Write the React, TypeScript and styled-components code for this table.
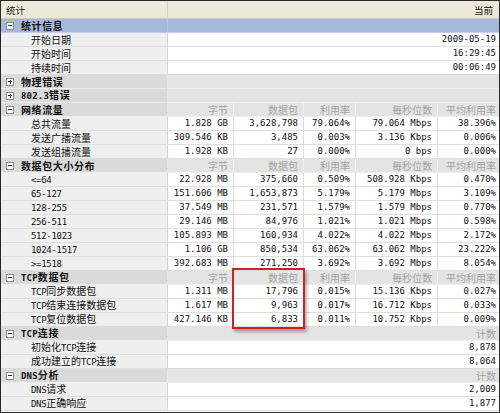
import React from "react";
import styled, { createGlobalStyle, css } from "styled-components";

const GlobalStyle = createGlobalStyle`
  html, body { margin: 0; padding: 0; background: #ffffff; }
  * { box-sizing: border-box; }
`;

const CJK = `"Noto Sans CJK SC", "Noto Sans", sans-serif`;
const MONO = `"DejaVu Sans Mono", "Liberation Mono", monospace`;
const COLS = "167px 66px 70px 52px 82px 1fr";

const Frame = styled.div`
  position: relative;
  width: 500px;
  height: 413px;
  border: 1px solid #2a2a2a;
  overflow: hidden;
  font-family: ${CJK};
  font-size: 10px;
  color: #1a1a1a;
  background: #ffffff;
`;

const Header = styled.div`
  display: grid;
  grid-template-columns: 167px 1fr;
  height: 18px;
  background: #ece9d8;
  border-bottom: 1px solid #d2cebd;
`;

const HeaderCell = styled.div<{ $right?: boolean }>`
  display: flex;
  align-items: center;
  justify-content: ${(p) => (p.$right ? "flex-end" : "flex-start")};
  padding: 0 ${(p) => (p.$right ? "6px" : "0")} 0 ${(p) => (p.$right ? "0" : "5px")};
  font-size: 9.5px;
  color: #111;
  border-right: ${(p) => (p.$right ? "none" : "1px solid #d6d2c2")};
`;

const Row = styled.div<{ $kind: "group" | "item"; $selected?: boolean }>`
  display: grid;
  grid-template-columns: ${COLS};
  height: 14px;
  ${(p) =>
    p.$selected
      ? css`
          background: #a6b8dc;
          border-bottom: 1px solid #c3cfe8;
        `
      : p.$kind === "group"
      ? css`
          background: #dcdcdc;
          border-bottom: 1px solid #eeeeee;
        `
      : css`
          background: #ffffff;
          border-bottom: 1px solid #dddddd;
        `}
`;

const LabelCell = styled.div<{ $kind: "group" | "item"; $selected?: boolean }>`
  display: flex;
  align-items: center;
  height: 13px;
  white-space: nowrap;
  padding-left: ${(p) => (p.$kind === "group" ? "5px" : "30px")};
  background: ${(p) =>
    p.$selected ? "transparent" : p.$kind === "group" ? "#dadada" : "#efefef"};
  border-right: 1px solid
    ${(p) => (p.$selected ? "#b7c6e4" : p.$kind === "group" ? "#e8e8e8" : "#d4d4d4")};
  font-weight: ${(p) => (p.$kind === "group" ? 700 : 400)};
  letter-spacing: ${(p) => (p.$kind === "group" ? "0.6px" : "0")};
  color: #111;
`;

const LabelLine = styled.span`
  display: block;
  line-height: 13px;
`;

const ValueCell = styled.div<{ $span?: boolean; $head?: boolean; $selected?: boolean }>`
  display: flex;
  align-items: center;
  justify-content: flex-end;
  height: 13px;
  line-height: 13px;
  white-space: nowrap;
  overflow: hidden;
  padding-right: 5px;
  grid-column: ${(p) => (p.$span ? "2 / -1" : "auto")};
  font-family: ${(p) => (p.$head ? CJK : MONO)};
  font-size: ${(p) => (p.$head ? "10px" : "9px")};
  color: ${(p) => (p.$head ? "#a3a3a3" : "#111111")};
  background: ${(p) => (p.$selected ? "transparent" : p.$head ? "#e4e4e4" : "#ffffff")};
  border-right: 1px solid ${(p) => (p.$head ? "#f2f2f2" : "#dcdcdc")};
  &:last-child {
    border-right: none;
    padding-right: 3px;
  }
`;

const Expander = styled.span<{ $open: boolean }>`
  position: relative;
  display: inline-block;
  flex: none;
  width: 8px;
  height: 8px;
  margin-right: 7px;
  border: 1px solid #8e8e8e;
  background: #fbfbfb;
  &::before {
    content: "";
    position: absolute;
    left: 1px;
    top: 2.5px;
    width: 4px;
    height: 1px;
    background: #333;
  }
  ${(p) =>
    !p.$open &&
    css`
      &::after {
        content: "";
        position: absolute;
        left: 2.5px;
        top: 1px;
        width: 1px;
        height: 4px;
        background: #333;
      }
    `}
`;

const Latin = styled.span<{ $bold?: boolean }>`
  font-family: ${MONO};
  font-size: 9px;
  letter-spacing: ${(p) => (p.$bold ? "0.2px" : "-0.3px")};
  font-weight: ${(p) => (p.$bold ? 700 : 400)};
`;

const Highlight = styled.div`
  position: absolute;
  left: 231px;
  top: 267px;
  width: 73px;
  height: 61px;
  border: 2px solid #d21f1f;
  box-shadow: 2px 3px 3px rgba(0, 0, 0, 0.3);
  pointer-events: none;
`;

type Group = {
  kind: "group";
  label: string;
  open: boolean;
  selected?: boolean;
  heads?: string[];
};
type Item = { kind: "item"; label: string; values: string[] };
type Entry = Group | Item;

const FIVE = ["字节", "数据包", "利用率", "每秒位数", "平均利用率"];

const rows: Entry[] = [
  { kind: "group", label: "统计信息", open: true, selected: true },
  { kind: "item", label: "开始日期", values: ["2009-05-19"] },
  { kind: "item", label: "开始时间", values: ["16:29:45"] },
  { kind: "item", label: "持续时间", values: ["00:06:49"] },
  { kind: "group", label: "物理错误", open: false },
  { kind: "group", label: "802.3错误", open: false },
  { kind: "group", label: "网络流量", open: true, heads: FIVE },
  { kind: "item", label: "总共流量", values: ["1.828 GB", "3,628,798", "79.064%", "79.064 Mbps", "38.396%"] },
  { kind: "item", label: "发送广播流量", values: ["309.546 KB", "3,485", "0.003%", "3.136 Kbps", "0.006%"] },
  { kind: "item", label: "发送组播流量", values: ["1.928 KB", "27", "0.000%", "0 bps", "0.000%"] },
  { kind: "group", label: "数据包大小分布", open: true, heads: FIVE },
  { kind: "item", label: "<=64", values: ["22.928 MB", "375,660", "0.509%", "508.928 Kbps", "0.470%"] },
  { kind: "item", label: "65-127", values: ["151.606 MB", "1,653,873", "5.179%", "5.179 Mbps", "3.109%"] },
  { kind: "item", label: "128-255", values: ["37.549 MB", "231,571", "1.579%", "1.579 Mbps", "0.770%"] },
  { kind: "item", label: "256-511", values: ["29.146 MB", "84,976", "1.021%", "1.021 Mbps", "0.598%"] },
  { kind: "item", label: "512-1023", values: ["105.893 MB", "160,934", "4.022%", "4.022 Mbps", "2.172%"] },
  { kind: "item", label: "1024-1517", values: ["1.106 GB", "850,534", "63.062%", "63.062 Mbps", "23.222%"] },
  { kind: "item", label: ">=1518", values: ["392.683 MB", "271,250", "3.692%", "3.692 Mbps", "8.054%"] },
  { kind: "group", label: "TCP数据包", open: true, heads: FIVE },
  { kind: "item", label: "TCP同步数据包", values: ["1.311 MB", "17,796", "0.015%", "15.136 Kbps", "0.027%"] },
  { kind: "item", label: "TCP结束连接数据包", values: ["1.617 MB", "9,963", "0.017%", "16.712 Kbps", "0.033%"] },
  { kind: "item", label: "TCP复位数据包", values: ["427.146 KB", "6,833", "0.011%", "10.752 Kbps", "0.009%"] },
  { kind: "group", label: "TCP连接", open: true, heads: ["计数"] },
  { kind: "item", label: "初始化TCP连接", values: ["8,878"] },
  { kind: "item", label: "成功建立的TCP连接", values: ["8,064"] },
  { kind: "group", label: "DNS分析", open: true, heads: ["计数"] },
  { kind: "item", label: "DNS请求", values: ["2,009"] },
  { kind: "item", label: "DNS正确响应", values: ["1,877"] },
];

function LabelText({ text, bold }: { text: string; bold?: boolean }) {
  const parts = text.split(/([\x00-\x7F]+)/);
  return (
    <LabelLine>
      {parts.map((p, i) =>
        i % 2 === 1 ? (
          <Latin key={i} $bold={bold}>
            {p}
          </Latin>
        ) : (
          <React.Fragment key={i}>{p}</React.Fragment>
        )
      )}
    </LabelLine>
  );
}

export default function App() {
  return (
    <>
      <GlobalStyle />
      <Frame>
        <Header>
          <HeaderCell>统计</HeaderCell>
          <HeaderCell $right>当前</HeaderCell>
        </Header>
        {rows.map((r, idx) =>
          r.kind === "group" ? (
            <Row key={idx} $kind="group" $selected={r.selected}>
              <LabelCell $kind="group" $selected={r.selected}>
                <Expander $open={r.open} />
                <LabelText text={r.label} bold />
              </LabelCell>
              {r.heads && r.heads.length > 1 ? (
                r.heads.map((h) => (
                  <ValueCell key={h} $head>
                    {h}
                  </ValueCell>
                ))
              ) : (
                <ValueCell $span $head $selected={r.selected}>
                  {r.heads ? r.heads[0] : ""}
                </ValueCell>
              )}
            </Row>
          ) : (
            <Row key={idx} $kind="item">
              <LabelCell $kind="item">
                <LabelText text={r.label} />
              </LabelCell>
              {r.values.length > 1 ? (
                r.values.map((v, i) => <ValueCell key={i}>{v}</ValueCell>)
              ) : (
                <ValueCell $span>{r.values[0]}</ValueCell>
              )}
            </Row>
          )
        )}
        <Highlight />
      </Frame>
    </>
  );
}
